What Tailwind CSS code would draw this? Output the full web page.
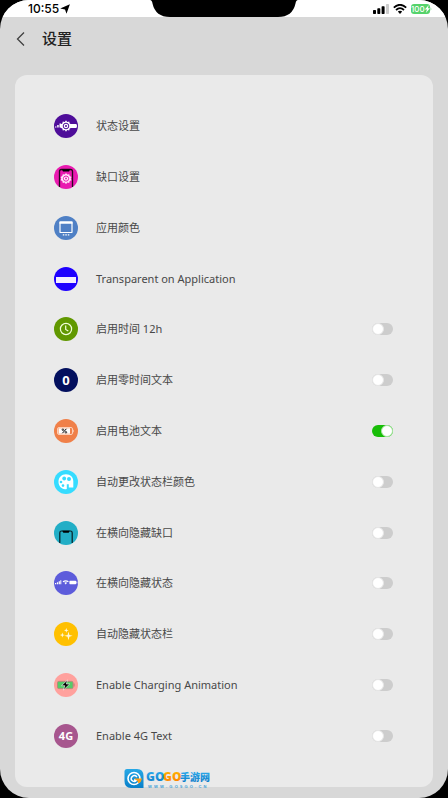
<!DOCTYPE html>
<html lang="zh-CN">
<head>
<meta charset="utf-8">
<meta name="viewport" content="width=device-width, initial-scale=1">
<title>设置</title>
<script src="https://cdn.jsdelivr.net/npm/@tailwindcss/browser@4"></script>
</head>
<body class="bg-black font-['Inter','Noto_Sans_CJK_SC',sans-serif] text-[#484848]">
<div class="relative flex min-h-screen flex-col overflow-hidden rounded-[29px] bg-[#d8d8d8]">
  <div class="flex h-[17px] items-center justify-between bg-white pr-4 pl-7 text-black">
    <div class="flex items-center gap-px text-[12px] leading-4 font-medium">
      <span>10:55</span>
      <svg class="size-[10px]" viewBox="0 0 10 10" aria-hidden="true"><path d="M9.900.2 6.500 9.800 5 5.600.2 4.500Z" fill="#000"/></svg>
    </div>
    <div class="flex items-center gap-1">
      <svg class="h-[10px] w-4" viewBox="0 0 16 10" aria-hidden="true"><rect x="0" y="6" width="3" height="4" rx=".7"/><rect x="4.3" y="4.3" width="3" height="5.7" rx=".7"/><rect x="8.6" y="2.3" width="3" height="7.7" rx=".7"/><rect x="13" y="0" width="3" height="10" rx=".7" fill="#ccc"/></svg>
      <svg class="h-[10px] w-[14px]" viewBox="0 0 14 10" fill="none" stroke="#000" aria-hidden="true"><path d="M.8 3.6Q7-2 13.2 3.6" stroke-width="1.8"/><path d="M3 6Q7 2.4 11 6" stroke-width="1.7"/><path d="m7 10-2.2-2.4Q7 5.800 9.200 7.600Z" fill="#000" stroke="none"/></svg>
      <svg class="h-[10px] w-[21px]" viewBox="0 0 21 10" aria-label="100" role="img"><rect width="19" height="10" rx="3" fill="#55d36b"/><path d="M19.700 3q1.300 2 0 4Z" fill="#55d36b"/><text x="0" y="8" font-size="8" font-weight="500" fill="#fff">100</text><path d="m17.800 1-4 4.500h2.200L14.800 9l4.200-4.800h-2.200Z" fill="#fff"/></svg>
    </div>
  </div>
  <svg class="absolute top-0 left-1/2 h-[17px] w-[148px] -translate-x-1/2" viewBox="0 0 148 17" aria-hidden="true"><path d="M0 0Q2 0 2.500 3.500Q5.500 17 20 17H128Q142.500 17 145.500 3.500Q146 0 148 0Z" fill="#000"/></svg>

  <header class="flex h-[58px] items-start px-[14px] pt-[10px]">
    <button type="button" aria-label="返回" class="flex h-6 w-[28px] items-center"><svg class="h-4 w-[14px]" viewBox="0 0 14 16" fill="none" stroke="#404040" stroke-width="1.300" aria-hidden="true"><path d="M10 1.500 3.500 8l6.500 6.500"/></svg></button>
    <h1 class="text-[15px] leading-6 font-medium text-[#222]">设置</h1>
  </header>

  <main class="mx-[15px] mb-[11px] flex flex-1 flex-col rounded-xl bg-[#eaeaea]">
    <ul class="flex flex-1 flex-col py-[26px] pr-10 pl-[39px] font-['Noto_Sans','Noto_Sans_CJK_SC',sans-serif] text-[11px] leading-4">
      <li class="flex flex-1"><a href="#status" class="flex flex-1 items-center gap-[18px]">
        <svg class="size-6" viewBox="0 0 24 24" aria-hidden="true"><circle cx="12" cy="12" r="12" fill="#4e0d99"/><path d="M1 13.500h1.500v-1H1ZM3.200 13.500h1.500v-2.500H3.200ZM5.500 13.500H7V9.500H5.500ZM16 10h6q1 0 1 2t-1 2h-6Z" fill="#fff"/><path d="m12 6.300 1.200 1.600 2-.3.500 1.900 1.900.900-.800 1.600.8 1.700-1.900.8-.5 1.900-2-.3-1.200 1.600-1.200-1.600-2 .3-.5-1.900-1.900-.8.8-1.700-.8-1.600 1.900-.9.500-1.900 2 .3Z" fill="#fff"/><circle cx="12" cy="12" r="2.800" fill="#fff" stroke="#4e0d99" stroke-width="1"/><circle cx="12" cy="12" r="1" fill="#4e0d99"/></svg>
        <span>状态设置</span></a></li>
      <li class="flex flex-1"><a href="#notch" class="flex flex-1 items-center gap-[18px]">
        <svg class="size-6" viewBox="0 0 24 24" aria-hidden="true"><circle cx="12" cy="12" r="12" fill="#e91bb0"/><path d="M5.500 22V6.500Q5.500 4.500 7.500 4.500h9Q18.500 4.500 18.500 6.500V22" fill="none" stroke="#28091f" stroke-width="1.300"/><path d="M8 4.500h8l-1 2H9Z"/><path d="m12 8 1.200 1.500 2-.3.500 1.900 1.800.9-.8 1.500.8 1.700-1.800.8-.5 1.900-2-.3L12 19.200l-1.200-1.600-2 .3-.5-1.900-1.800-.8.8-1.700-.8-1.500 1.800-.9.500-1.900 2 .3Z" fill="#ffe3f7"/><circle cx="12" cy="13.600" r="2.600" fill="#fff" stroke="#e91bb0"/><circle cx="12" cy="13.600" r="1" fill="#e91bb0"/></svg>
        <span>缺口设置</span></a></li>
      <li class="flex flex-1"><a href="#color" class="flex flex-1 items-center gap-[18px]">
        <svg class="size-6" viewBox="0 0 24 24" aria-hidden="true"><circle cx="12" cy="12" r="12" fill="#4f80c5"/><rect x="6" y="6" width="12" height="10.500" rx=".6" fill="none" stroke="#fff" stroke-width="1.200"/><path d="M5.500 5.500h13v2.300h-13ZM8.800 18.300h1.500v1.300H8.800ZM11.300 18.300h1.500v1.300h-1.500ZM13.800 18.300h1.500v1.300h-1.500Z" fill="#fff"/></svg>
        <span>应用颜色</span></a></li>
      <li class="flex flex-1"><a href="#transparent" class="flex flex-1 items-center gap-[18px]">
        <svg class="size-6" viewBox="0 0 24 24" aria-hidden="true"><circle cx="12" cy="12" r="12" fill="#1e00ff"/><rect x="2" y="10" width="20" height="6" fill="#f3edff"/></svg>
        <span>Transparent on Application</span></a></li>
      <li class="flex flex-1"><label class="flex flex-1 items-center gap-[18px]">
        <svg class="size-6" viewBox="0 0 24 24" aria-hidden="true"><circle cx="12" cy="12" r="12" fill="#619800"/><g fill="none" stroke="#f2ffd8" stroke-width="1.200"><circle cx="12" cy="12" r="5.600"/><path d="M11.700 8.500v4l2.600 1.500"/></g></svg>
        <span class="flex-1">启用时间 12h</span>
        <input type="checkbox" role="switch" class="h-3 w-[21px] appearance-none rounded-full bg-[#cdcdcd] before:block before:size-3 before:rounded-full before:border before:border-[#e6e6e6] before:bg-white checked:bg-[#18bd08] checked:before:ml-[9px] checked:before:border-[#a8e5a2]"></label></li>
      <li class="flex flex-1"><label class="flex flex-1 items-center gap-[18px]">
        <span class="flex size-6 items-center justify-center rounded-full bg-[#03105e] text-[13px] font-bold text-white" aria-hidden="true">0</span>
        <span class="flex-1">启用零时间文本</span>
        <input type="checkbox" role="switch" class="h-3 w-[21px] appearance-none rounded-full bg-[#cdcdcd] before:block before:size-3 before:rounded-full before:border before:border-[#e6e6e6] before:bg-white checked:bg-[#18bd08] checked:before:ml-[9px] checked:before:border-[#a8e5a2]"></label></li>
      <li class="flex flex-1"><label class="flex flex-1 items-center gap-[18px]">
        <svg class="size-6" viewBox="0 0 24 24" aria-hidden="true"><circle cx="12" cy="12" r="12" fill="#f08049"/><rect x="3.500" y="8.500" width="15" height="7" rx="1.500" fill="none" stroke="#ffe4d6" stroke-width=".8"/><path d="M4.500 9.300h11.500v5.400H4.500ZM19.300 10.300q1.300 1.700 0 3.400Z" fill="#fff"/><path d="m12.400 9.800-4 4.400" stroke="#000" stroke-width="1"/><circle cx="8.900" cy="10.700" r=".8" fill="none" stroke="#000" stroke-width=".8"/><circle cx="11.900" cy="13.300" r=".8" fill="none" stroke="#000" stroke-width=".8"/></svg>
        <span class="flex-1">启用电池文本</span>
        <input type="checkbox" role="switch" checked class="h-3 w-[21px] appearance-none rounded-full bg-[#cdcdcd] before:block before:size-3 before:rounded-full before:border before:border-[#e6e6e6] before:bg-white checked:bg-[#18bd08] checked:before:ml-[9px] checked:before:border-[#a8e5a2]"></label></li>
      <li class="flex flex-1"><label class="flex flex-1 items-center gap-[18px]">
        <svg class="size-6" viewBox="0 0 24 24" aria-hidden="true"><circle cx="12" cy="12" r="12" fill="#36dcff"/><path d="M12 4.300c4.500 0 7.300 3.200 7.300 7v6.200h-4.500v-3.300h-2v4.800c-5 1-8.300-2.600-8.300-7.200C4.500 7.500 7.500 4.300 12 4.300Z" fill="#fff"/><g fill="#36dcff"><circle cx="10.200" cy="8.500" r="1.900"/><circle cx="15" cy="9" r="2"/><circle cx="7" cy="12" r="1.300"/><circle cx="9" cy="15.600" r="1.300"/></g></svg>
        <span class="flex-1">自动更改状态栏颜色</span>
        <input type="checkbox" role="switch" class="h-3 w-[21px] appearance-none rounded-full bg-[#cdcdcd] before:block before:size-3 before:rounded-full before:border before:border-[#e6e6e6] before:bg-white checked:bg-[#18bd08] checked:before:ml-[9px] checked:before:border-[#a8e5a2]"></label></li>
      <li class="flex flex-1"><label class="flex flex-1 items-center gap-[18px]">
        <svg class="size-6" viewBox="0 0 24 24" aria-hidden="true"><circle cx="12" cy="12" r="12" fill="#22aec6"/><path d="M5.800 22V11.800Q5.800 10 7.600 10h8.800q1.800 0 1.800 1.800V22" fill="none" stroke="#061f24" stroke-width="1.200"/><path d="M8.300 9.800h7.400l-1 2H9.300Z"/></svg>
        <span class="flex-1">在横向隐藏缺口</span>
        <input type="checkbox" role="switch" class="h-3 w-[21px] appearance-none rounded-full bg-[#cdcdcd] before:block before:size-3 before:rounded-full before:border before:border-[#e6e6e6] before:bg-white checked:bg-[#18bd08] checked:before:ml-[9px] checked:before:border-[#a8e5a2]"></label></li>
      <li class="flex flex-1"><label class="flex flex-1 items-center gap-[18px]">
        <svg class="size-6" viewBox="0 0 24 24" aria-hidden="true"><circle cx="12" cy="12" r="12" fill="#5d5cdb"/><path d="M1 13.200h1.200V12H1ZM2.900 13.200h1.200V11.300H2.900ZM4.700 13.200h1.200v-2.900H4.700ZM6.300 13.200h1V9.300h-1ZM16 9.800h5.500q.6 0 .6.600v2.200q0 .6-.6.600H16q-.6 0-.6-.6v-2.200q0-.6.600-.6ZM22.500 10.600h.8v1.800h-.8ZM10.300 11.700l1.400 1.800 1.400-1.800q-1.400-.8-2.800 0Z" fill="#fff"/><path d="M9 10.800q2.700-2 5.400 0" fill="none" stroke="#fff" stroke-width="1.200"/></svg>
        <span class="flex-1">在横向隐藏状态</span>
        <input type="checkbox" role="switch" class="h-3 w-[21px] appearance-none rounded-full bg-[#cdcdcd] before:block before:size-3 before:rounded-full before:border before:border-[#e6e6e6] before:bg-white checked:bg-[#18bd08] checked:before:ml-[9px] checked:before:border-[#a8e5a2]"></label></li>
      <li class="flex flex-1"><label class="flex flex-1 items-center gap-[18px]">
        <svg class="size-6" viewBox="0 0 24 24" aria-hidden="true"><circle cx="12" cy="12" r="12" fill="#ffc000"/><path d="m14.500 9.500.9 3.400 3.200.9-3.200 1-.9 3.400-.9-3.400-3.200-1 3.200-.9ZM12.300 6l.6 1.800 1.700.6-1.700.6-.6 1.800-.6-1.800-1.700-.6 1.700-.6ZM8.300 10.600l.7 1.800 1.800.6-1.800.7-.7 1.800-.6-1.800-1.800-.7 1.800-.6Z" fill="#fff7d7"/></svg>
        <span class="flex-1">自动隐藏状态栏</span>
        <input type="checkbox" role="switch" class="h-3 w-[21px] appearance-none rounded-full bg-[#cdcdcd] before:block before:size-3 before:rounded-full before:border before:border-[#e6e6e6] before:bg-white checked:bg-[#18bd08] checked:before:ml-[9px] checked:before:border-[#a8e5a2]"></label></li>
      <li class="flex flex-1"><label class="flex flex-1 items-center gap-[18px]">
        <svg class="size-6" viewBox="0 0 24 24" aria-hidden="true"><circle cx="12" cy="12" r="12" fill="#ffa19d"/><rect x="3.500" y="8.400" width="15.500" height="7.200" rx="1.300" fill="#55cb69" stroke="#ad8b77" stroke-width=".9"/><path d="M19.600 10.400h.9v3.200h-.9Z" fill="#b57b6c"/><path d="m13.500 7-6 5.700h3.400l-1.500 4.300 6.300-6H12.300Z" stroke="#fff" stroke-width=".6"/></svg>
        <span class="flex-1">Enable Charging Animation</span>
        <input type="checkbox" role="switch" class="h-3 w-[21px] appearance-none rounded-full bg-[#cdcdcd] before:block before:size-3 before:rounded-full before:border before:border-[#e6e6e6] before:bg-white checked:bg-[#18bd08] checked:before:ml-[9px] checked:before:border-[#a8e5a2]"></label></li>
      <li class="flex flex-1"><label class="flex flex-1 items-center gap-[18px]">
        <span class="flex size-6 items-center justify-center rounded-full bg-[#a7568e] text-[11px] font-bold text-white" aria-hidden="true">4G</span>
        <span class="flex-1">Enable 4G Text</span>
        <input type="checkbox" role="switch" class="h-3 w-[21px] appearance-none rounded-full bg-[#cdcdcd] before:block before:size-3 before:rounded-full before:border before:border-[#e6e6e6] before:bg-white checked:bg-[#18bd08] checked:before:ml-[9px] checked:before:border-[#a8e5a2]"></label></li>
    </ul>
  </main>

  <div class="absolute bottom-2 left-[124px] flex items-center gap-[2px]">
    <svg class="h-[22px] w-5" viewBox="0 0 20 22" aria-hidden="true"><defs><linearGradient id="tile" x2="0" y2="1"><stop stop-color="#27a8e6"/><stop offset="1" stop-color="#087fc9"/></linearGradient></defs><path d="M3 1h10q6.500 0 6.500 7v12H7q-6.500 0-6.500-7V3.500Q.5 1 3 1Z" fill="url(#tile)"/><circle cx="10" cy="10.500" r="6" fill="none" stroke="#fff" stroke-width="1.600"/><path d="M13 8.800Q10 6.300 8 8.800t.5 4Q11 14.500 12.500 12H10" fill="none" stroke="#fff" stroke-width="1.500"/><path d="M10 10.500h8q-.6 3.500-3.500 5l-1-2.500Z" fill="#ff9d13"/></svg>
    <svg class="h-[22px] w-16" viewBox="0 0 64 22" role="img" aria-label="GOGO手游网"><defs><linearGradient id="blue" x2="0" y2="1"><stop stop-color="#35b6f2"/><stop offset="1" stop-color="#0876c6"/></linearGradient><linearGradient id="orange" x2="0" y2="1"><stop stop-color="#ffc000"/><stop offset="1" stop-color="#ff7500"/></linearGradient></defs><g font-weight="800"><text x="0" y="13" font-family="'Open Sans', sans-serif" font-size="12" fill="url(#blue)">GO</text><text x="17" y="13" font-family="'Open Sans', sans-serif" font-size="12" fill="url(#orange)">GO</text><text x="34" y="13" font-family="'Noto Sans CJK SC', sans-serif" font-size="10" fill="url(#blue)">手游网</text></g><text x="2" y="20" font-family="'Liberation Sans', sans-serif" font-weight="700" font-size="4" fill="#3da0d7" xml:space="preserve">W  W  W  .  G  O  9  G  O  .  C  N</text></svg>
  </div>
</div>
</body>
</html>
